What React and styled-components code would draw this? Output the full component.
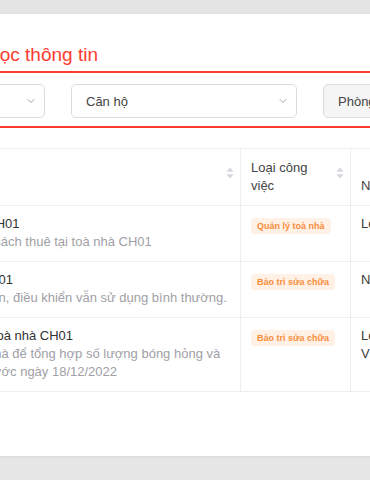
import styled, { createGlobalStyle } from "styled-components";
import { ChevronDown } from "lucide-react";

const GlobalStyle = createGlobalStyle`
    body{
        margin: 0;
        background: linear-gradient(#e4e4e4, #e6e6e6);
        font-family: "Liberation Sans", Arial, sans-serif;
        overflow: hidden;
    }
`;

const tasks = [
    {
        id: 1,
        building: "CH01",
        title: "Báo cáo CH01",
        desc: "Kiểm tra khách thuê tại toà nhà CH01",
        type: "Quản lý toà nhà",
        person: "Lê Văn Hùng",
    },
    {
        id: 2,
        building: "CH01",
        title: "Sửa tivi P101",
        desc: "Hỏng nguồn, điều khiển vẫn sử dụng bình thường.",
        type: "Bảo trì sửa chữa",
        person: "Ngô Văn An",
    },
    {
        id: 3,
        building: "CH01",
        title: "Thay đèn toà nhà CH01",
        desc: "Kiểm tra nhà để tổng hợp số lượng bóng hỏng và thay thế trước ngày 18/12/2022",
        type: "Bảo trì sửa chữa",
        person: "Lê Thị Thanh Vân",
    },
];

function SortIcon() {
    return (
        <svg width="8" height="12" viewBox="0 0 8 12">
            <path d="M4 0.5 L7.5 4.8 H0.5 Z" fill="#d6d6dc" />
            <path d="M4 11.5 L7.5 7.2 H0.5 Z" fill="#d6d6dc" />
        </svg>
    );
}

export default function App() {
    const filters = [
        { label: "Toà nhà", disabled: false },
        { label: "Căn hộ", disabled: false },
        { label: "Phòng", disabled: true },
    ];

    return (
        <>
            <GlobalStyle />
            <Page>
                <Card>
                    <Title>Bộ lọc thông tin</Title>
                    <FilterBox>
                        {filters.map((f) => (
                            <Select key={f.label} $disabled={f.disabled}>
                                <span>{f.label}</span>
                                <ChevronDown size={12} strokeWidth={1.6} color="#8c8c8c" />
                            </Select>
                        ))}
                    </FilterBox>
                    <Table>
                        <colgroup>
                            <col style={{ width: 60 }} />
                            <col style={{ width: 164 }} />
                            <col style={{ width: 316 }} />
                            <col style={{ width: 110 }} />
                            <col style={{ width: 120 }} />
                        </colgroup>
                        <thead>
                            <tr>
                                <Th>
                                    <HeadCell><span>STT</span></HeadCell>
                                </Th>
                                <Th>
                                    <HeadCell><span>Toà nhà</span><SortIcon /></HeadCell>
                                </Th>
                                <Th>
                                    <HeadCell><span>Nội dung</span><SortIcon /></HeadCell>
                                </Th>
                                <Th>
                                    <HeadCell><span>Loại công việc</span><SortIcon /></HeadCell>
                                </Th>
                                <Th>
                                    <HeadCell><span>Người thực hiện</span></HeadCell>
                                </Th>
                            </tr>
                        </thead>
                        <tbody>
                            {tasks.map((t) => (
                                <tr key={t.id}>
                                    <Td>{t.id}</Td>
                                    <Td>{t.building}</Td>
                                    <Td>
                                        <TaskTitle>{t.title}</TaskTitle>
                                        <TaskDesc>{t.desc}</TaskDesc>
                                    </Td>
                                    <Td>
                                        <Badge>{t.type}</Badge>
                                    </Td>
                                    <Td>{t.person}</Td>
                                </tr>
                            ))}
                        </tbody>
                    </Table>
                </Card>
            </Page>
        </>
    );
}

const Page = styled.div`
    height: 480px;
    padding-top: 14px;
    box-sizing: border-box;
`;

const Card = styled.div`
    margin-left: -300px;
    width: 900px;
    height: 442px;
    background-color: #fff;
    box-shadow: 0 1px 3px rgba(0,0,0,0.06);
    padding-top: 29px;
    box-sizing: border-box;
`;

const Title = styled.h2`
    margin: 0 0 4px 267px;
    font-size: 19px;
    line-height: 24px;
    font-weight: 400;
    color: #ff3b30;
`;

const FilterBox = styled.div`
    margin-left: 30px;
    border: 2px solid #ff3b30;
    border-right: none;
    padding: 11px 0 8px 87px;
    display: flex;
    gap: 26px;
`;

const Select = styled.div`
    width: 226px;
    height: 34px;
    box-sizing: border-box;
    flex-shrink: 0;
    display: flex;
    align-items: center;
    justify-content: space-between;
    padding: 0 7px 0 14px;
    border: 1px solid #dcdce0;
    border-radius: 5px;
    background-color: ${props => props.$disabled ? "#f5f5f6" : "#fff"};
    font-size: 13px;
    color: #444;
`;

const Table = styled.table`
    margin-top: 20px;
    border-collapse: collapse;
    table-layout: fixed;
    width: 770px;
    font-size: 13px;
    color: #333;
`;

const Th = styled.th`
    height: 56px;
    padding: 10px 6px 10px 10px;
    box-sizing: border-box;
    border: 1px solid #ededf2;
    font-weight: 400;
    text-align: left;
    vertical-align: middle;
    color: #444;
    line-height: 18px;
`;

const HeadCell = styled.div`
    min-height: 36px;
    display: flex;
    align-items: flex-end;
    justify-content: space-between;
    gap: 6px;
    svg{
        flex-shrink: 0;
        align-self: center;
        margin-top: -8px;
    }
`;

const Td = styled.td`
    padding: 9px 8px 10px 10px;
    border: 1px solid #ededf2;
    vertical-align: top;
    line-height: 18px;
    color: #3a3a3a;
`;

const TaskTitle = styled.div`
    color: #333;
`;

const TaskDesc = styled.div`
    color: #a0a0a6;
`;

const Badge = styled.span`
    display: inline-block;
    margin-top: 3px;
    height: 16px;
    line-height: 16px;
    padding: 0 6px;
    border-radius: 4px;
    background-color: #fff1e6;
    color: #fa8c3c;
    font-size: 9px;
    font-weight: 700;
    white-space: nowrap;
`;
